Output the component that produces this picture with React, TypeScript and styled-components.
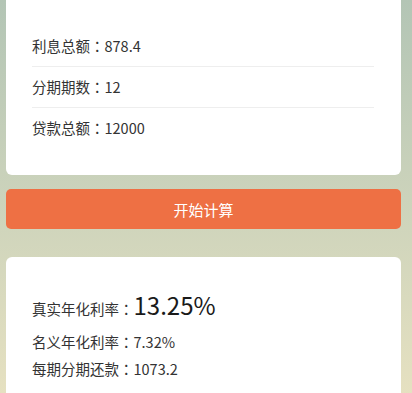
import styled, { createGlobalStyle } from "styled-components";

const GlobalStyle = createGlobalStyle`
  html, body {
    margin: 0;
    padding: 0;
  }
  body {
    font-family: "Noto Sans CJK SC", "Noto Sans", sans-serif;
    color: #333;
    overflow: hidden;
  }
`;

interface IRow {
  label: string;
  value: string;
}

const summary: IRow[] = [
  { label: "利息总额", value: "878.4" },
  { label: "分期期数", value: "12" },
  { label: "贷款总额", value: "12000" },
];

const App: React.FC = () => {
  return (
    <Page>
      <GlobalStyle />
      <SummaryCard>
        {summary.map((row) => (
          <SummaryRow key={row.label}>
            {row.label}<Colon>：</Colon>{row.value}
          </SummaryRow>
        ))}
      </SummaryCard>

      <CalcButton type="button">开始计算</CalcButton>

      <ResultCard>
        <ResultRow>
          真实年化利率<Colon>：</Colon><BigValue>13.25%</BigValue>
        </ResultRow>
        <ResultRow>名义年化利率<Colon>：</Colon>7.32%</ResultRow>
        <ResultRow>每期分期还款<Colon>：</Colon>1073.2</ResultRow>
      </ResultCard>
    </Page>
  );
};

const Page = styled.div`
  min-height: 100vh;
  box-sizing: border-box;
  padding: 0 11px 40px 6px;
  background: linear-gradient(180deg, #b3c5b5 0%, #ccd3bb 45%, #ece4c2 100%);
  overflow: hidden;
`;

const SummaryCard = styled.div`
  margin-top: -10px;
  padding: 36px 27px 27px 26px;
  background-color: #fff;
  border-radius: 6px;
`;

const SummaryRow = styled.div`
  font-size: 14.5px;
  line-height: 40px;
  border-bottom: 1px solid #eeeeee;

  &:last-child {
    border-bottom: none;
  }
`;

// centred full-width colon, as in the reference
const Colon = styled.span`
  font-family: "Noto Sans CJK TC", sans-serif;
`;

const CalcButton = styled.button`
  display: block;
  width: 100%;
  height: 40px;
  margin-top: 14px;
  border: none;
  border-radius: 5px;
  background-color: #ee7044;
  color: #fff;
  font-family: "Noto Sans CJK SC", sans-serif;
  font-size: 15px;
`;

const ResultCard = styled.div`
  margin-top: 28px;
  padding: 30px 26px 20px;
  background-color: #fff;
  border-radius: 6px;
`;

const ResultRow = styled.div`
  font-size: 14.5px;
  line-height: 27px;

  &:first-child {
    line-height: 36px;
    margin-bottom: 1px;
  }
`;

const BigValue = styled.span`
  font-size: 24px;
  color: #1a1a1a;
`;

export default App;
